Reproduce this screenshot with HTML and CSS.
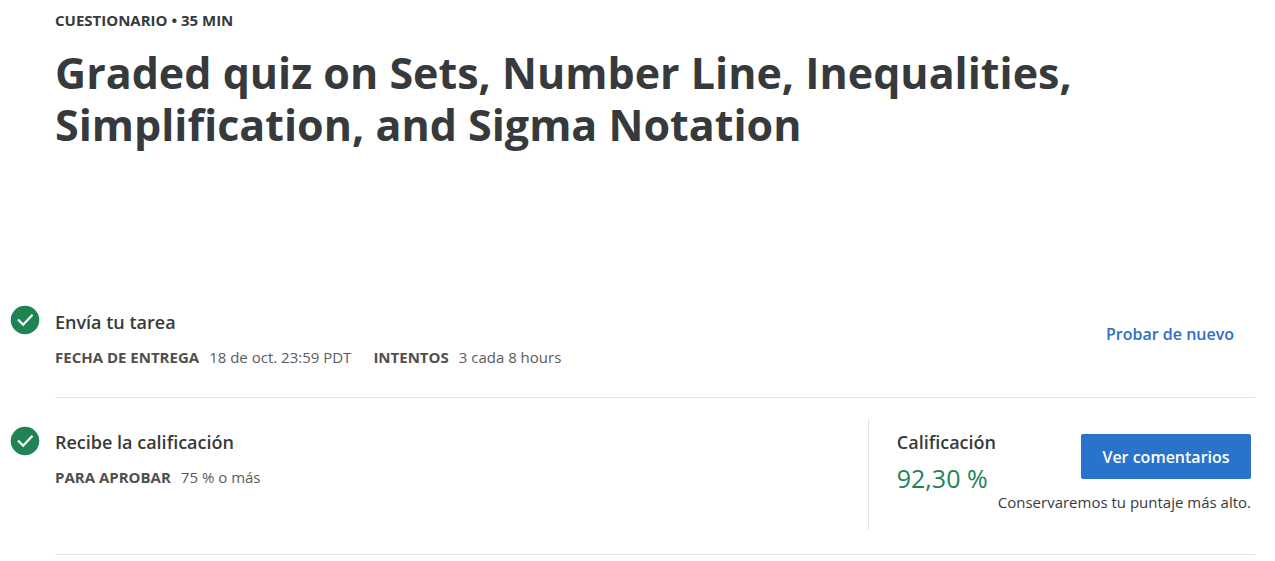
FILE: index.html
```html
<!DOCTYPE html>
<html lang="es">
<head>
<meta charset="utf-8">
<title>Graded quiz</title>
<link rel="stylesheet" href="styles.css">
</head>
<body>
<main class="page">
  <header class="header">
    <p class="kind">CUESTIONARIO • 35 MIN</p>
    <h1 class="title">Graded quiz on Sets, Number Line, Inequalities, Simplification, and Sigma Notation</h1>
  </header>
  <section class="step">
    <svg class="check" viewBox="0 0 30 30" aria-hidden="true"><circle cx="15" cy="15" r="14.3"/><path d="M8 14.500l5.200 5.200L22.500 9.800"/></svg>
    <div class="row row-submit">
      <div class="info">
        <h2 class="heading">Envía tu tarea</h2>
        <dl class="facts">
          <div class="fact"><dt>FECHA DE ENTREGA</dt><dd>18 de oct. 23:59 PDT</dd></div>
          <div class="fact"><dt>INTENTOS</dt><dd>3 cada 8 hours</dd></div>
        </dl>
      </div>
      <button class="retry" type="button">Probar de nuevo</button>
    </div>
  </section>
  <section class="step step-grade">
    <svg class="check" viewBox="0 0 30 30" aria-hidden="true"><circle cx="15" cy="15" r="14.3"/><path d="M8 14.500l5.200 5.200L22.500 9.800"/></svg>
    <div class="row row-grade">
      <div class="info">
        <h2 class="heading">Recibe la calificación</h2>
        <dl class="facts">
          <div class="fact"><dt>PARA APROBAR</dt><dd>75 % o más</dd></div>
        </dl>
      </div>
      <div class="grade">
        <div class="score">
          <h3 class="heading">Calificación</h3>
          <p class="value">92,30 %</p>
        </div>
        <div class="feedback">
          <button class="view" type="button">Ver comentarios</button>
          <p class="note">Conservaremos tu puntaje más alto.</p>
        </div>
      </div>
    </div>
  </section>
</main>
</body>
</html>
```
FILE: styles.css
```css
* { box-sizing: border-box; }
body, h1, h2, h3, p, dl, dd { margin: 0; }
body {
  background: #fff;
  color: #373a3c;
  font-family: "Open Sans", "Noto Sans", sans-serif;
  font-size: 15px;
  line-height: 22px;
}
.page { padding: 9px 20px 0 10px; }
.header { padding: 0 0 0 45px; min-height: 289px; }
.kind, .fact dt { font-weight: 700; }
.title { margin-top: 16px; max-width: 1080px; font-size: 43px; line-height: 52px; font-weight: 700; }
.step { display: grid; grid-template-columns: 30px 1fr; column-gap: 15px; }
.check { width: 30px; height: 30px; margin-top: 7px; }
.step-grade .check { margin-top: 28px; }
.check circle { fill: #1f8354; }
.check path { fill: none; stroke: #fff; stroke-width: 2.2; }
.row { display: flex; justify-content: space-between; border-bottom: 1px solid #e1e1e1; }
.row-submit { padding: 12px 21px 29px 0; }
.row-grade { padding: 21px 0 24px; }
.row-grade .info { padding-top: 11px; }
.heading { font-size: 18px; line-height: 24px; font-weight: 600; }
.facts { display: flex; gap: 22px; margin-top: 12px; color: #4f4f4f; }
.fact { display: flex; gap: 10px; }
.fact dd { color: #5c5c5c; }
button { border: 0; padding: 0; font: inherit; font-size: 16px; font-weight: 600; }
.retry { align-self: flex-start; margin-top: 13px; background: none; color: #2f6fc4; }
.grade { display: flex; border-left: 1px solid #e1e1e1; padding: 11px 4px 17px 28px; }
.score { width: 101px; }
.value { margin-top: 8px; font-size: 25px; line-height: 32px; color: #1f8354; }
.feedback { display: flex; flex-direction: column; align-items: flex-end; gap: 12px; padding-top: 4px; }
.view { width: 170px; height: 45px; border-radius: 2px; background: #2a73cc; color: #fff; }
```
